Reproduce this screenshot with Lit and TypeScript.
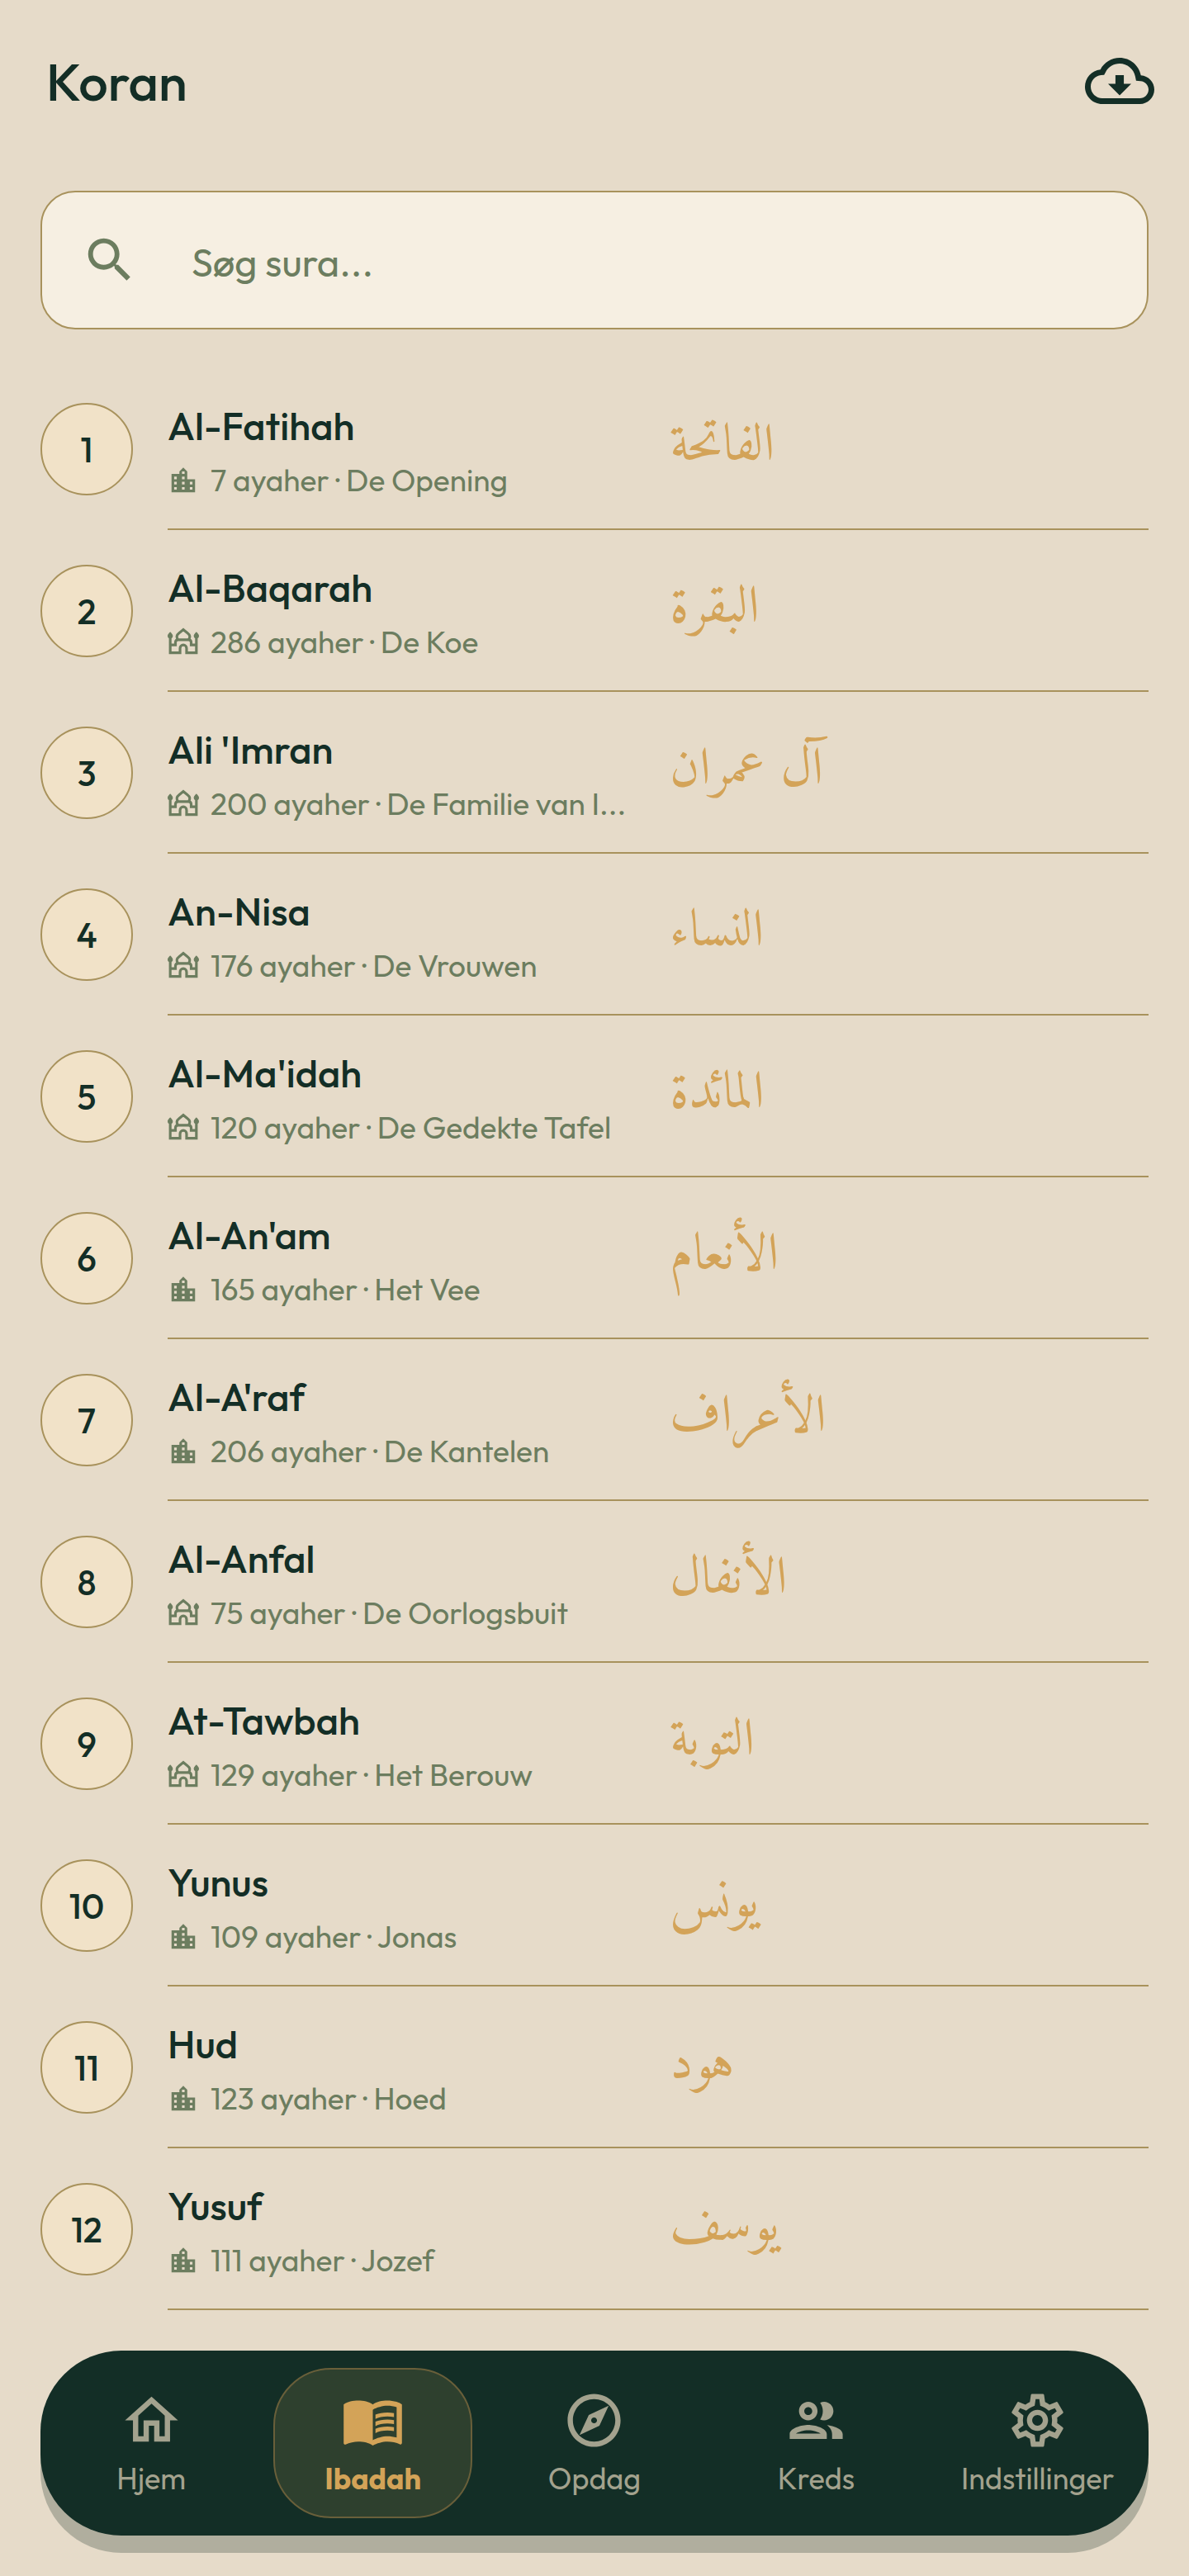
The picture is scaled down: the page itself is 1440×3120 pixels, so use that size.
import { LitElement, html, css, svg } from "lit";
import { customElement, property, state } from "lit/decorators.js";

type Place = "city" | "mosque";

interface Sura {
  name: string;
  ayahs: number;
  meaning: string;
  arabic: string;
  place: Place;
}

const SURAS: Sura[] = [
  { name: "Al-Fatihah", ayahs: 7, meaning: "De Opening", arabic: "الفاتحة", place: "city" },
  { name: "Al-Baqarah", ayahs: 286, meaning: "De Koe", arabic: "البقرة", place: "mosque" },
  { name: "Ali 'Imran", ayahs: 200, meaning: "De Familie van I...", arabic: "آل عمران", place: "mosque" },
  { name: "An-Nisa", ayahs: 176, meaning: "De Vrouwen", arabic: "النساء", place: "mosque" },
  { name: "Al-Ma'idah", ayahs: 120, meaning: "De Gedekte Tafel", arabic: "المائدة", place: "mosque" },
  { name: "Al-An'am", ayahs: 165, meaning: "Het Vee", arabic: "الأنعام", place: "city" },
  { name: "Al-A'raf", ayahs: 206, meaning: "De Kantelen", arabic: "الأعراف", place: "city" },
  { name: "Al-Anfal", ayahs: 75, meaning: "De Oorlogsbuit", arabic: "الأنفال", place: "mosque" },
  { name: "At-Tawbah", ayahs: 129, meaning: "Het Berouw", arabic: "التوبة", place: "mosque" },
  { name: "Yunus", ayahs: 109, meaning: "Jonas", arabic: "يونس", place: "city" },
  { name: "Hud", ayahs: 123, meaning: "Hoed", arabic: "هود", place: "city" },
  { name: "Yusuf", ayahs: 111, meaning: "Jozef", arabic: "يوسف", place: "city" },
];

const ICONS = {
  cloud: svg`<path d="M19.35 10.04C18.67 6.59 15.64 4 12 4 9.11 4 6.6 5.64 5.35 8.04 2.34 8.36 0 10.91 0 14c0 3.31 2.69 6 6 6h13c2.76 0 5-2.24 5-5 0-2.64-2.05-4.78-4.65-4.96zM19 18H6c-2.21 0-4-1.79-4-4 0-2.05 1.53-3.76 3.56-3.97l1.07-.11.5-.95C8.08 7.14 9.94 6 12 6c2.62 0 4.88 1.86 5.39 4.43l.3 1.5 1.53.11c1.56.1 2.78 1.41 2.78 2.96 0 1.65-1.35 3-3 3zm-5.55-8h-2.9v3H8l4 4 4-4h-2.55z"/>`,
  search: svg`<path d="M15.5 14h-.79l-.28-.27C15.41 12.59 16 11.11 16 9.5 16 5.91 13.09 3 9.5 3S3 5.91 3 9.5 5.91 16 9.5 16c1.61 0 3.09-.59 4.23-1.57l.27.28v.79l5 4.99L20.49 19l-4.99-5zm-6 0C7.01 14 5 11.99 5 9.5S7.01 5 9.5 5 14 7.01 14 9.5 11.99 14 9.5 14z"/>`,
  city: svg`<path d="M15 11V5l-3-3-3 3v2H3v14h18V11h-6zm-8 8H5v-2h2v2zm0-4H5v-2h2v2zm0-4H5V9h2v2zm6 8h-2v-2h2v2zm0-4h-2v-2h2v2zm0-4h-2V9h2v2zm0-4h-2V5h2v2zm6 12h-2v-2h2v2zm0-4h-2v-2h2v2z"/>`,
  mosque: svg`
    <path d="M2 4S0 5.900 0 7a2 2 0 0 0 4 0c0-1.100-2-3-2-3zM22 4s-2 1.900-2 3a2 2 0 0 0 4 0c0-1.100-2-3-2-3z"/>
    <path fill="none" stroke="currentColor" stroke-width="2" d="M2 8v12h7.500v-3.500a2.500 2.500 0 0 1 5 0V20H22V8M2 14h4v-2c0-1.200.8-2 2-2h8c1.200 0 2 .8 2 2v2h4M8 10C6.500 8.200 6.900 6.300 8.600 5.100L12 2.300l3.400 2.800C17.100 6.300 17.500 8.200 16 10"/>`,
  home: svg`<path d="M12 3L2 12h3v8h6v-6h2v6h6v-8h3L12 3zm5 15h-2v-6H9v6H7v-7.810l5-4.500 5 4.500V18z"/>`,
  book: svg`<path d="M21,5c-1.11-0.35-2.33-0.5-3.5-0.5c-1.95,0-4.05,0.4-5.5,1.5c-1.45-1.1-3.55-1.5-5.5-1.5S2.45,4.9,1,6v14.65 c0,0.25,0.25,0.5,0.5,0.5c0.1,0,0.15-0.05,0.25-0.05C3.1,20.45,5.05,20,6.5,20c1.95,0,4.05,0.4,5.5,1.5c1.35-0.85,3.8-1.5,5.5-1.5 c1.65,0,3.35,0.3,4.75,1.05c0.1,0.05,0.15,0.05,0.25,0.05c0.25,0,0.5-0.25,0.5-0.5V6C22.4,5.55,21.75,5.25,21,5z M21,18.5 c-1.1-0.35-2.3-0.5-3.5-0.5c-1.7,0-4.15,0.65-5.5,1.5V8c1.35-0.85,3.8-1.5,5.5-1.5c1.2,0,2.4,0.15,3.5,0.5V18.5z M17.5,10.5c0.88,0,1.73,0.09,2.5,0.26V9.24C19.21,9.09,18.36,9,17.5,9c-1.7,0-3.24,0.29-4.5,0.83v1.66 C14.13,10.85,15.7,10.5,17.5,10.5z M13,12.49v1.66c1.13-0.64,2.7-0.99,4.5-0.99c0.88,0,1.73,0.09,2.5,0.26V11.9c-0.79-0.15-1.64-0.24-2.5-0.24 C15.8,11.66,14.26,11.96,13,12.49z M17.5,14.33c-1.7,0-3.24,0.29-4.5,0.83v1.66c1.13-0.64,2.7-0.99,4.5-0.99c0.88,0,1.73,0.09,2.5,0.26v-1.52 C19.21,14.41,18.36,14.33,17.5,14.33z"/>`,
  compass: svg`<path d="M12 2C6.48 2 2 6.48 2 12s4.48 10 10 10 10-4.48 10-10S17.52 2 12 2zm0 18c-4.41 0-8-3.59-8-8s3.59-8 8-8 8 3.59 8 8-3.59 8-8 8zm-5.5-2.5l7.51-3.49L17.5 6.5 9.99 9.99 6.5 17.5zm5.5-6.6c.61 0 1.1.49 1.1 1.1s-.49 1.1-1.1 1.1-1.1-.49-1.1-1.1.49-1.1 1.1-1.1z"/>`,
  people: svg`<path d="M9 13.75c-2.34 0-7 1.17-7 3.5V19h14v-1.75c0-2.33-4.66-3.5-7-3.5zM4.34 17c.84-.58 2.87-1.25 4.66-1.25s3.82.67 4.66 1.25H4.34zM9 12c1.93 0 3.5-1.57 3.5-3.5S10.93 5 9 5 5.5 6.57 5.5 8.5 7.07 12 9 12zm0-5c.83 0 1.5.67 1.5 1.5S9.83 10 9 10s-1.500-.67-1.500-1.500S8.170 7 9 7zm7.040 6.810c1.160.84 1.960 1.960 1.960 3.440V19h4v-1.750c0-2.020-3.500-3.170-5.960-3.440zM15 12c1.930 0 3.500-1.570 3.500-3.500S16.930 5 15 5c-.54 0-1.040.13-1.500.35.63.89 1 1.980 1 3.150s-.37 2.260-1 3.150c.46.22.96.35 1.500.35z"/>`,
  gear: svg`<path d="M19.43 12.98c.04-.32.07-.64.07-.98s-.03-.66-.07-.98l2.11-1.65c.19-.15.24-.42.12-.64l-2-3.46c-.09-.16-.26-.25-.44-.25-.06 0-.12.01-.17.03l-2.49 1c-.52-.4-1.08-.73-1.69-.98l-.38-2.65C14.46 2.18 14.25 2 14 2h-4c-.25 0-.46.18-.49.42l-.38 2.65c-.61.25-1.17.59-1.69.98l-2.49-1c-.06-.02-.12-.03-.18-.03-.17 0-.34.09-.43.25l-2 3.46c-.13.22-.07.49.12.64l2.11 1.65c-.04.32-.07.65-.07.98s.03.66.07.98l-2.11 1.65c-.19.15-.24.42-.12.64l2 3.46c.09.16.26.25.44.25.06 0 .12-.01.17-.03l2.49-1c.52.4 1.08.73 1.69.98l.38 2.65c.03.24.24.42.49.42h4c.25 0 .46-.18.49-.42l.38-2.65c.61-.25 1.17-.59 1.69-.98l2.49 1c.06.02.12.03.18.03.17 0 .34-.09.43-.25l2-3.46c.12-.22.07-.49-.12-.64l-2.11-1.65zm-1.98-1.71c.04.31.05.52.05.73 0 .21-.02.43-.05.73l-.14 1.13.89.7 1.08.84-.7 1.21-1.27-.51-1.04-.42-.9.68c-.43.32-.84.56-1.25.73l-1.06.43-.16 1.13-.2 1.35h-1.4l-.19-1.35-.16-1.13-1.06-.43c-.43-.18-.83-.41-1.23-.71l-.91-.7-1.06.43-1.27.51-.7-1.21 1.08-.84.89-.7-.14-1.13c-.03-.31-.05-.54-.05-.74s.02-.43.05-.73l.14-1.13-.89-.7-1.08-.84.7-1.21 1.27.51 1.04.42.9-.68c.43-.32.84-.56 1.25-.73l1.06-.43.16-1.13.2-1.35h1.39l.19 1.35.16 1.13 1.06.43c.43.18.83.41 1.23.71l.91.7 1.06-.43 1.27-.51.7 1.21-1.07.85-.89.7.14 1.13zM12 8c-2.21 0-4 1.79-4 4s1.79 4 4 4 4-1.79 4-4-1.79-4-4-4zm0 6c-1.1 0-2-.9-2-2s.9-2 2-2 2 .9 2 2-.9 2-2 2z"/>`,
};

type IconName = keyof typeof ICONS;

const TABS: { label: string; icon: IconName }[] = [
  { label: "Hjem", icon: "home" },
  { label: "Ibadah", icon: "book" },
  { label: "Opdag", icon: "compass" },
  { label: "Kreds", icon: "people" },
  { label: "Indstillinger", icon: "gear" },
];

@customElement("app-icon")
export class AppIcon extends LitElement {
  @property() name: IconName = "home";

  static styles = css`
    :host {
      display: block;
      flex: none;
    }
    .glyph {
      display: block;
      width: 100%;
      height: 100%;
      fill: currentColor;
    }
  `;

  render() {
    return html`<svg class="glyph" viewBox="0 0 24 24" aria-hidden="true">${ICONS[this.name]}</svg>`;
  }
}

@customElement("sura-row")
export class SuraRow extends LitElement {
  @property({ type: Number }) number = 1;
  @property({ attribute: false }) sura!: Sura;

  static styles = css`
    :host {
      display: block;
    }
    .row {
      display: flex;
      gap: 42px;
      color: inherit;
      text-decoration: none;
    }
    .number {
      box-sizing: border-box;
      flex: none;
      display: grid;
      place-items: center;
      width: 112px;
      height: 112px;
      margin: 42px 0;
      border: 2px solid #a8925c;
      border-radius: 50%;
      background: #f1e2c8;
      font-size: 42px;
      font-weight: 500;
    }
    .body {
      flex: 1;
      min-width: 0;
      display: grid;
      grid-template-columns: 1fr 1fr;
      column-gap: 28px;
      border-bottom: 2px solid #a8925c;
    }
    .text {
      min-width: 0;
      padding-top: 40px;
    }
    .name {
      margin: 0;
      font-size: 47px;
      line-height: 60px;
      font-weight: 500;
    }
    .meta {
      display: flex;
      align-items: center;
      gap: 14px;
      margin-top: 12px;
      font-size: 37px;
      line-height: 48px;
      color: #6c7d5f;
    }
    .place {
      width: 38px;
      height: 38px;
    }
    .arabic {
      padding-top: 54px;
      text-align: left;
      font-family: "Amiri", "Noto Naskh Arabic", "DejaVu Sans", serif;
      font-size: 63px;
      line-height: 84px;
      color: #d3a358;
    }
  `;

  render() {
    const { name, ayahs, meaning, arabic, place } = this.sura;
    return html`
      <a class="row" href="#sura-${this.number}">
        <span class="number">${this.number}</span>
        <div class="body">
          <div class="text">
            <h2 class="name">${name}</h2>
            <div class="meta">
              <app-icon class="place" name=${place}></app-icon>
              <span>${`${ayahs} ayaher · ${meaning}`}</span>
            </div>
          </div>
          <div class="arabic" lang="ar" dir="rtl">${arabic}</div>
        </div>
      </a>
    `;
  }
}

@customElement("tab-bar")
export class TabBar extends LitElement {
  @state() private active = "Ibadah";

  static styles = css`
    :host {
      display: block;
    }
    .bar {
      display: grid;
      grid-template-columns: repeat(5, minmax(0, 1fr));
      padding: 21px 0;
      border-radius: 98px;
      background: #132e26;
      box-shadow: 0 21px 0 #b0ae9e;
    }
    .tab {
      display: flex;
      flex-direction: column;
      align-items: center;
      gap: 8px;
      margin: 0 14px;
      padding: 23px 0 22px;
      border: 2px solid transparent;
      border-radius: 70px;
      background: none;
      color: #a3a28e;
      font: inherit;
      font-size: 36px;
      line-height: 48px;
      white-space: nowrap;
      cursor: pointer;
    }
    .tab.active {
      border-color: #695f3a;
      background: #2e402e;
      color: #d3a358;
      font-weight: 700;
    }
    .icon {
      width: 77px;
      height: 77px;
    }
  `;

  render() {
    return html`
      <nav class="bar">
        ${TABS.map(
          (t) => html`
            <button class="tab ${t.label === this.active ? "active" : ""}" @click=${() => (this.active = t.label)}>
              <app-icon class="icon" name=${t.icon}></app-icon>
              <span>${t.label}</span>
            </button>
          `,
        )}
      </nav>
    `;
  }
}

@customElement("app-root")
export class AppRoot extends LitElement {
  @state() private query = "";

  static styles = css`
    :host {
      box-sizing: border-box;
      display: flex;
      flex-direction: column;
      min-height: 100vh;
      padding: 0 49px 49px;
      background: #e6dbc9;
      color: #132e26;
      font-family: "Outfit", "Inter", "Lato", sans-serif;
    }
    .header {
      display: flex;
      align-items: center;
      justify-content: space-between;
      height: 196px;
      padding-left: 7px;
      margin-right: -7px;
    }
    .title {
      margin: 0;
      font-size: 63px;
      font-weight: 500;
    }
    .download {
      padding: 0;
      border: 0;
      background: none;
      color: inherit;
      cursor: pointer;
    }
    .cloud {
      width: 84px;
      height: 84px;
    }
    .search {
      box-sizing: border-box;
      display: flex;
      align-items: center;
      gap: 64px;
      height: 168px;
      margin-top: 35px;
      padding: 0 47px;
      border: 2px solid #a8925c;
      border-radius: 42px;
      background: #f6efe2;
      color: #6c7d5f;
    }
    .lens {
      width: 70px;
      height: 70px;
    }
    .field {
      flex: 1;
      min-width: 0;
      padding: 4px 0 0;
      border: 0;
      outline: 0;
      background: none;
      color: #132e26;
      font: inherit;
      font-size: 47px;
    }
    .field::placeholder {
      color: #6c7d5f;
      opacity: 1;
    }
    .list {
      flex: 1;
      margin: 47px 0 49px;
      padding: 0;
      list-style: none;
    }
  `;

  render() {
    const q = this.query.trim().toLowerCase();
    const rows = SURAS.map((sura, i) => ({ sura, number: i + 1 })).filter(({ sura }) =>
      sura.name.toLowerCase().includes(q),
    );
    return html`
      <header class="header">
        <h1 class="title">Koran</h1>
        <button class="download" aria-label="Download">
          <app-icon class="cloud" name="cloud"></app-icon>
        </button>
      </header>
      <label class="search">
        <app-icon class="lens" name="search"></app-icon>
        <input
          class="field"
          type="text"
          aria-label="Søg sura"
          placeholder="Søg sura..."
          .value=${this.query}
          @input=${(e: Event) => (this.query = (e.target as HTMLInputElement).value)}
        />
      </label>
      <ul class="list">
        ${rows.map(({ sura, number }) => html`<li><sura-row .number=${number} .sura=${sura}></sura-row></li>`)}
      </ul>
      <tab-bar></tab-bar>
    `;
  }
}
